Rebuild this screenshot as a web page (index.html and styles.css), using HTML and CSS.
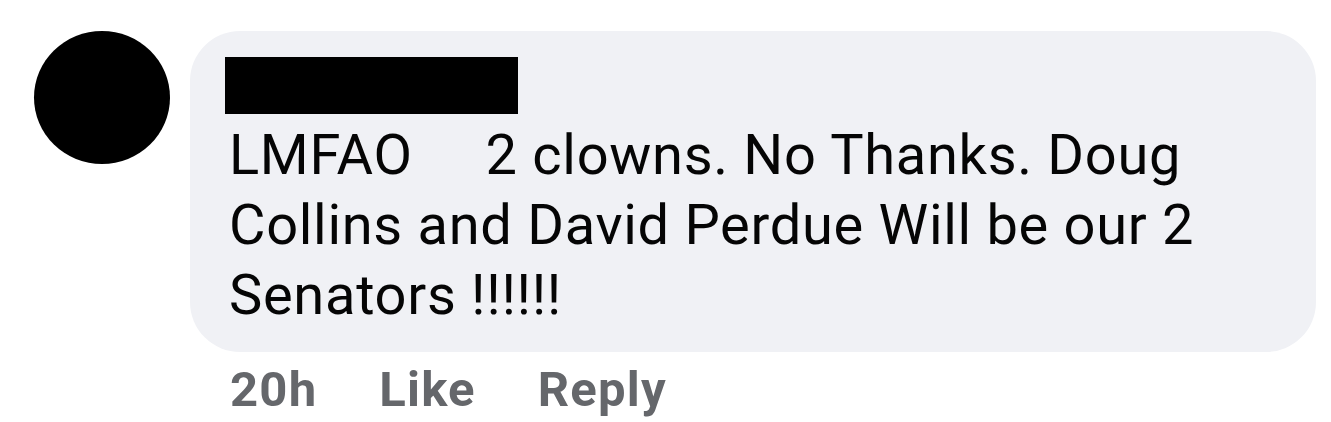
FILE: index.html
```html
<!DOCTYPE html>
<html lang="en">
<head>
  <meta charset="UTF-8" />
  <title>Comment</title>
  <link rel="stylesheet" href="styles.css">
</head>
<body>
  <div class="comment">
    <div class="avatar"></div>
    <div class="comment-body">
      <div class="bubble">
        <div class="author"></div>
        <p class="text">LMFAO&nbsp;&nbsp;&nbsp;&nbsp; 2 clowns. No Thanks. Doug Collins and David Perdue Will be our 2 Senators !!!!!!</p>
      </div>
      <div class="actions">
        <span>20h</span>
        <span>Like</span>
        <span>Reply</span>
      </div>
    </div>
  </div>
</body>
</html>
```

FILE: styles.css
```css
body {
  margin: 0;
  background: #fff;
  font-family: Roboto, "Liberation Sans", Arial, sans-serif;
}
.comment {
  display: flex;
  align-items: flex-start;
  gap: 20px;
  padding: 30px 15px 0 34px;
}
.avatar {
  flex: none;
  width: 136px;
  height: 133px;
  margin-top: 1px;
  border-radius: 50%;
  background: #000;
}
.comment-body {
  flex: 1;
}
.bubble {
  background: #f0f1f5;
  border-radius: 50px;
  padding: 26px 40px 22px 35px;
  margin-top: 1px;
}
.author {
  width: 293px;
  height: 57px;
  background: #000;
  margin-bottom: 6px;
}
.text {
  margin: 0 0 0 4px;
  font-size: 56px;
  line-height: 70px;
  letter-spacing: 0.7px;
  color: #050505;
}
.actions {
  display: flex;
  gap: 62px;
  margin-top: 10px;
  padding-left: 40px;
  font-size: 49px;
  line-height: 56px;
  letter-spacing: 1.2px;
  font-weight: bold;
  color: #65676b;
}
```
